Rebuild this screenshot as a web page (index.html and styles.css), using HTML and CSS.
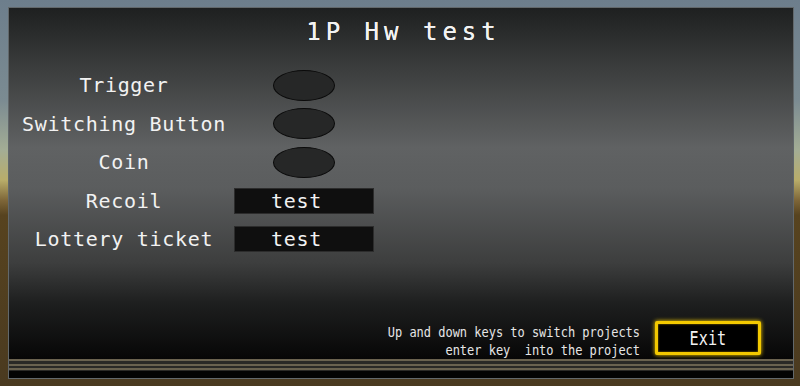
FILE: index.html
```html
<!DOCTYPE html>
<html>
	<head>
		<meta charset="utf-8">
		<meta name="viewport" content="width=device-width, initial-scale=1">
		<title>1P Hw test</title>
		<link rel="stylesheet" href="styles.css">
	</head>
	<body>
		<div class="panel">
			<h1 class="title">1P Hw test</h1>

			<div class="rows">
				<div class="label">Trigger</div>
				<div class="value"><span class="lamp"></span></div>

				<div class="label">Switching Button</div>
				<div class="value"><span class="lamp"></span></div>

				<div class="label">Coin</div>
				<div class="value"><span class="lamp"></span></div>

				<div class="label">Recoil</div>
				<div class="value"><span class="field">test</span></div>

				<div class="label">Lottery ticket</div>
				<div class="value"><span class="field">test</span></div>
			</div>

			<div class="footer">
				<div class="help">
					<span>Up and down keys to switch projects</span>
					<span>enter key  into the project</span>
				</div>
				<div class="exit"><span>Exit</span></div>
			</div>

			<div class="rails"></div>
		</div>
	</body>
</html>
```

FILE: styles.css
```css
html, body{
	margin: 0;
	height: 386px;
	overflow: hidden;
}
body{
	font-family: "DejaVu Sans Mono", "Liberation Mono", monospace;
	color: #f2f2f2;
	background: linear-gradient(to bottom,
		#6d7e8c 0px,
		#7b8b92 100px,
		#a3ad95 150px,
		#b9ad6a 180px,
		#7f6739 200px,
		#57431f 215px,
		#4a3a20 386px);
	padding: 7px 6px 7px 8px;
	box-sizing: border-box;
}

.panel{
	height: 372px;
	box-sizing: border-box;
	border: 1px solid #62686b;
	background: linear-gradient(to bottom,
		#1e2020 0px,
		#3b3d3d 60px,
		#606263 140px,
		#5b5d5e 180px,
		#3d3e3e 255px,
		#1e1f1f 295px,
		#060606 352px);
	display: flex;
	flex-direction: column;
}

.title{
	margin: 9px 0 0 0;
	font-size: 24px;
	line-height: 30px;
	font-weight: normal;
	letter-spacing: 5px;
	padding-left: 5px;
	text-align: center;
	text-shadow: 0 0 0.6px #fff;
}

.rows{
	margin-top: 19px;
	padding-left: 7px;
	display: grid;
	grid-template-columns: 216px 140px;
	column-gap: 2px;
	grid-auto-rows: 38.5px;
	align-items: center;
}
.label{
	font-size: 20px;
	letter-spacing: 0.7px;
	text-align: center;
}
.value{
	display: flex;
	justify-content: center;
	align-items: center;
}
.lamp{
	width: 60px;
	height: 29px;
	border-radius: 50%;
	background: #262727;
	border: 1px solid #0a0a0a;
}
.field{
	width: 140px;
	height: 26px;
	box-sizing: border-box;
	background: #0f0f0f;
	border: 1px solid #2c2c2c;
	font-size: 20px;
	line-height: 24px;
	letter-spacing: 0.7px;
	padding-left: 36px;
}

.footer{
	margin-top: auto;
	display: flex;
	justify-content: flex-end;
	align-items: flex-end;
	gap: 15px;
	padding-right: 32px;
}
.help{
	display: flex;
	flex-direction: column;
	align-items: flex-end;
	font-size: 14px;
	line-height: 18px;
	white-space: pre;
	color: #e6e6e6;
	transform: scaleX(0.855);
	transform-origin: right center;
}
.exit{
	width: 106px;
	height: 34px;
	box-sizing: border-box;
	margin-bottom: 4px;
	border: 3px solid #f3c900;
	border-radius: 2px;
	background: #000;
	box-shadow: 0 0 4px #ffd400, inset 0 0 2px #b08a00;
	display: flex;
	justify-content: center;
	align-items: center;
	font-size: 19px;
}
.exit span{
	display: inline-block;
	transform: scaleX(0.8);
}

.rails{
	height: 19px;
	background: linear-gradient(to bottom,
		#6a624f 0px, #6a624f 2px,
		#2a2926 2px, #2a2926 5px,
		#6a624f 5px, #6a624f 7px,
		#2a2926 7px, #2a2926 9px,
		#6a624f 9px, #6a624f 11px,
		#2a2926 11px, #2a2926 12px,
		#030303 12px);
}
```
